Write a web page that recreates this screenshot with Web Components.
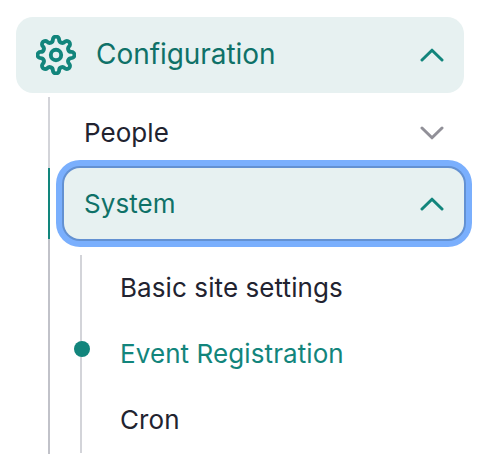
<!DOCTYPE html>
<html lang="en">
<head>
<meta charset="utf-8">
<title>Configuration menu</title>
<style>
html, body { margin: 0; background: #fff; }
body { width: 488px; height: 454px; overflow: hidden; font-family: Inter, "Liberation Sans", sans-serif; }
</style>
</head>
<body>
<side-menu>
  <menu-header slot="head">Configuration</menu-header>
  <menu-row>People</menu-row>
  <menu-row open>System</menu-row>
  <sub-menu>
    <sub-item>Basic site settings</sub-item>
    <sub-item active>Event Registration</sub-item>
    <sub-item>Cron</sub-item>
  </sub-menu>
</side-menu>
<script>
const define = (name, html, setup) => customElements.define(name, class extends HTMLElement {
  constructor() {
    super();
    this.attachShadow({ mode: 'open' }).innerHTML = html;
    if (setup) setup(this.shadowRoot);
  }
});

define('chevron-icon', `<style>
:host { display: block; width: 24px; height: 14px; color: #12857c; }
:host([down]) { color: #919098; transform: scaleY(-1); }
svg { display: block; }
</style><svg width="24" height="14" viewBox="0 0 24 14" fill="none" stroke="currentColor" stroke-width="3" stroke-linecap="round" stroke-linejoin="round"><path d="M2 12 12 2.2 22 12"/></svg>`);

// Eight rounded teeth: tangent convex and concave arcs around the centre.
define('gear-icon', `<style>
:host { display: block; width: 40px; height: 40px; color: #12857c; }
svg { display: block; }
</style><svg width="40" height="40" viewBox="-20 -20 40 40" fill="none" stroke="currentColor" stroke-width="3.9" stroke-linejoin="round"><path/><circle r="5.2"/></svg>`, root => {
  const polar = (r, a) => [r * Math.cos(a), r * Math.sin(a)];
  const mix = (p, q) => p.map((v, i) => (v + (q[i] - v) * 0.485).toFixed(3)).join(' ');
  let d = '';
  for (let i = 0; i < 8; i++) {
    const a = i * Math.PI / 4, h = Math.PI / 8;
    const tip = polar(15.1, a);
    d += (i ? 'A3.2 3.2 0 0 0 ' : 'M') + mix(tip, polar(16.9, a - h));
    d += 'A3 3 0 0 1 ' + mix(tip, polar(16.9, a + h));
  }
  const [x, y] = mix(polar(15.1, 0), polar(16.9, -Math.PI / 8)).split(' ');
  root.querySelector('path').setAttribute('d', d + `A3.2 3.2 0 0 0 ${x} ${y}Z`);
});

define('menu-header', `<style>
:host { display: flex; align-items: center; box-sizing: border-box; height: 76px; padding: 0 20px; border-radius: 17px; background: #e7f1f1; color: #0f7168; }
.label { flex: 1; margin-left: 20px; padding-bottom: 2px; font-size: 28px; line-height: 36px; letter-spacing: -.05px; }
</style><gear-icon></gear-icon><span class="label"><slot></slot></span><chevron-icon></chevron-icon>`);

define('menu-row', `<style>
:host { display: flex; align-items: center; box-sizing: border-box; height: 71px; border-left: 2px solid #d3d4d9; color: #222330; }
.box { flex: 1; display: flex; align-items: center; justify-content: space-between; height: 71px; margin-left: 14px; padding: 0 20px; border-radius: 16px; font-size: 26px; line-height: 34px; letter-spacing: .05px; }
:host([open]) { border-color: #12857c; color: #0f7168; }
:host([open]) .box { background: #e7f1f1; box-shadow: 0 0 0 2px #6391d2, 0 0 0 8px #7aaffd; }
</style><div class="box"><slot></slot><chevron-icon></chevron-icon></div>`, root => {
  if (!root.host.hasAttribute('open')) root.querySelector('chevron-icon').setAttribute('down', '');
});

define('sub-menu', `<style>
:host { display: block; height: 215px; box-sizing: border-box; padding: 16px 0 0 30px; border-left: 2px solid #c1c2c9; }
</style><slot></slot>`);

define('sub-item', `<style>
:host { display: flex; align-items: center; box-sizing: border-box; position: relative; height: 66px; padding-left: 38px; border-left: 2px solid #d3d4d9; font-size: 26px; line-height: 34px; letter-spacing: .09px; color: #222330; }
:host([active]) { color: #12857c; }
:host([active])::before { content: ""; position: absolute; left: -8px; top: 20px; width: 16px; height: 16px; border-radius: 50%; background: #12857c; }
</style><slot></slot>`);

define('side-menu', `<style>
:host { display: block; padding: 17px 24px 0 16px; }
nav { margin: 4px 0 0 32px; }
</style><slot name="head"></slot><nav><slot></slot></nav>`);
</script>
</body>
</html>
